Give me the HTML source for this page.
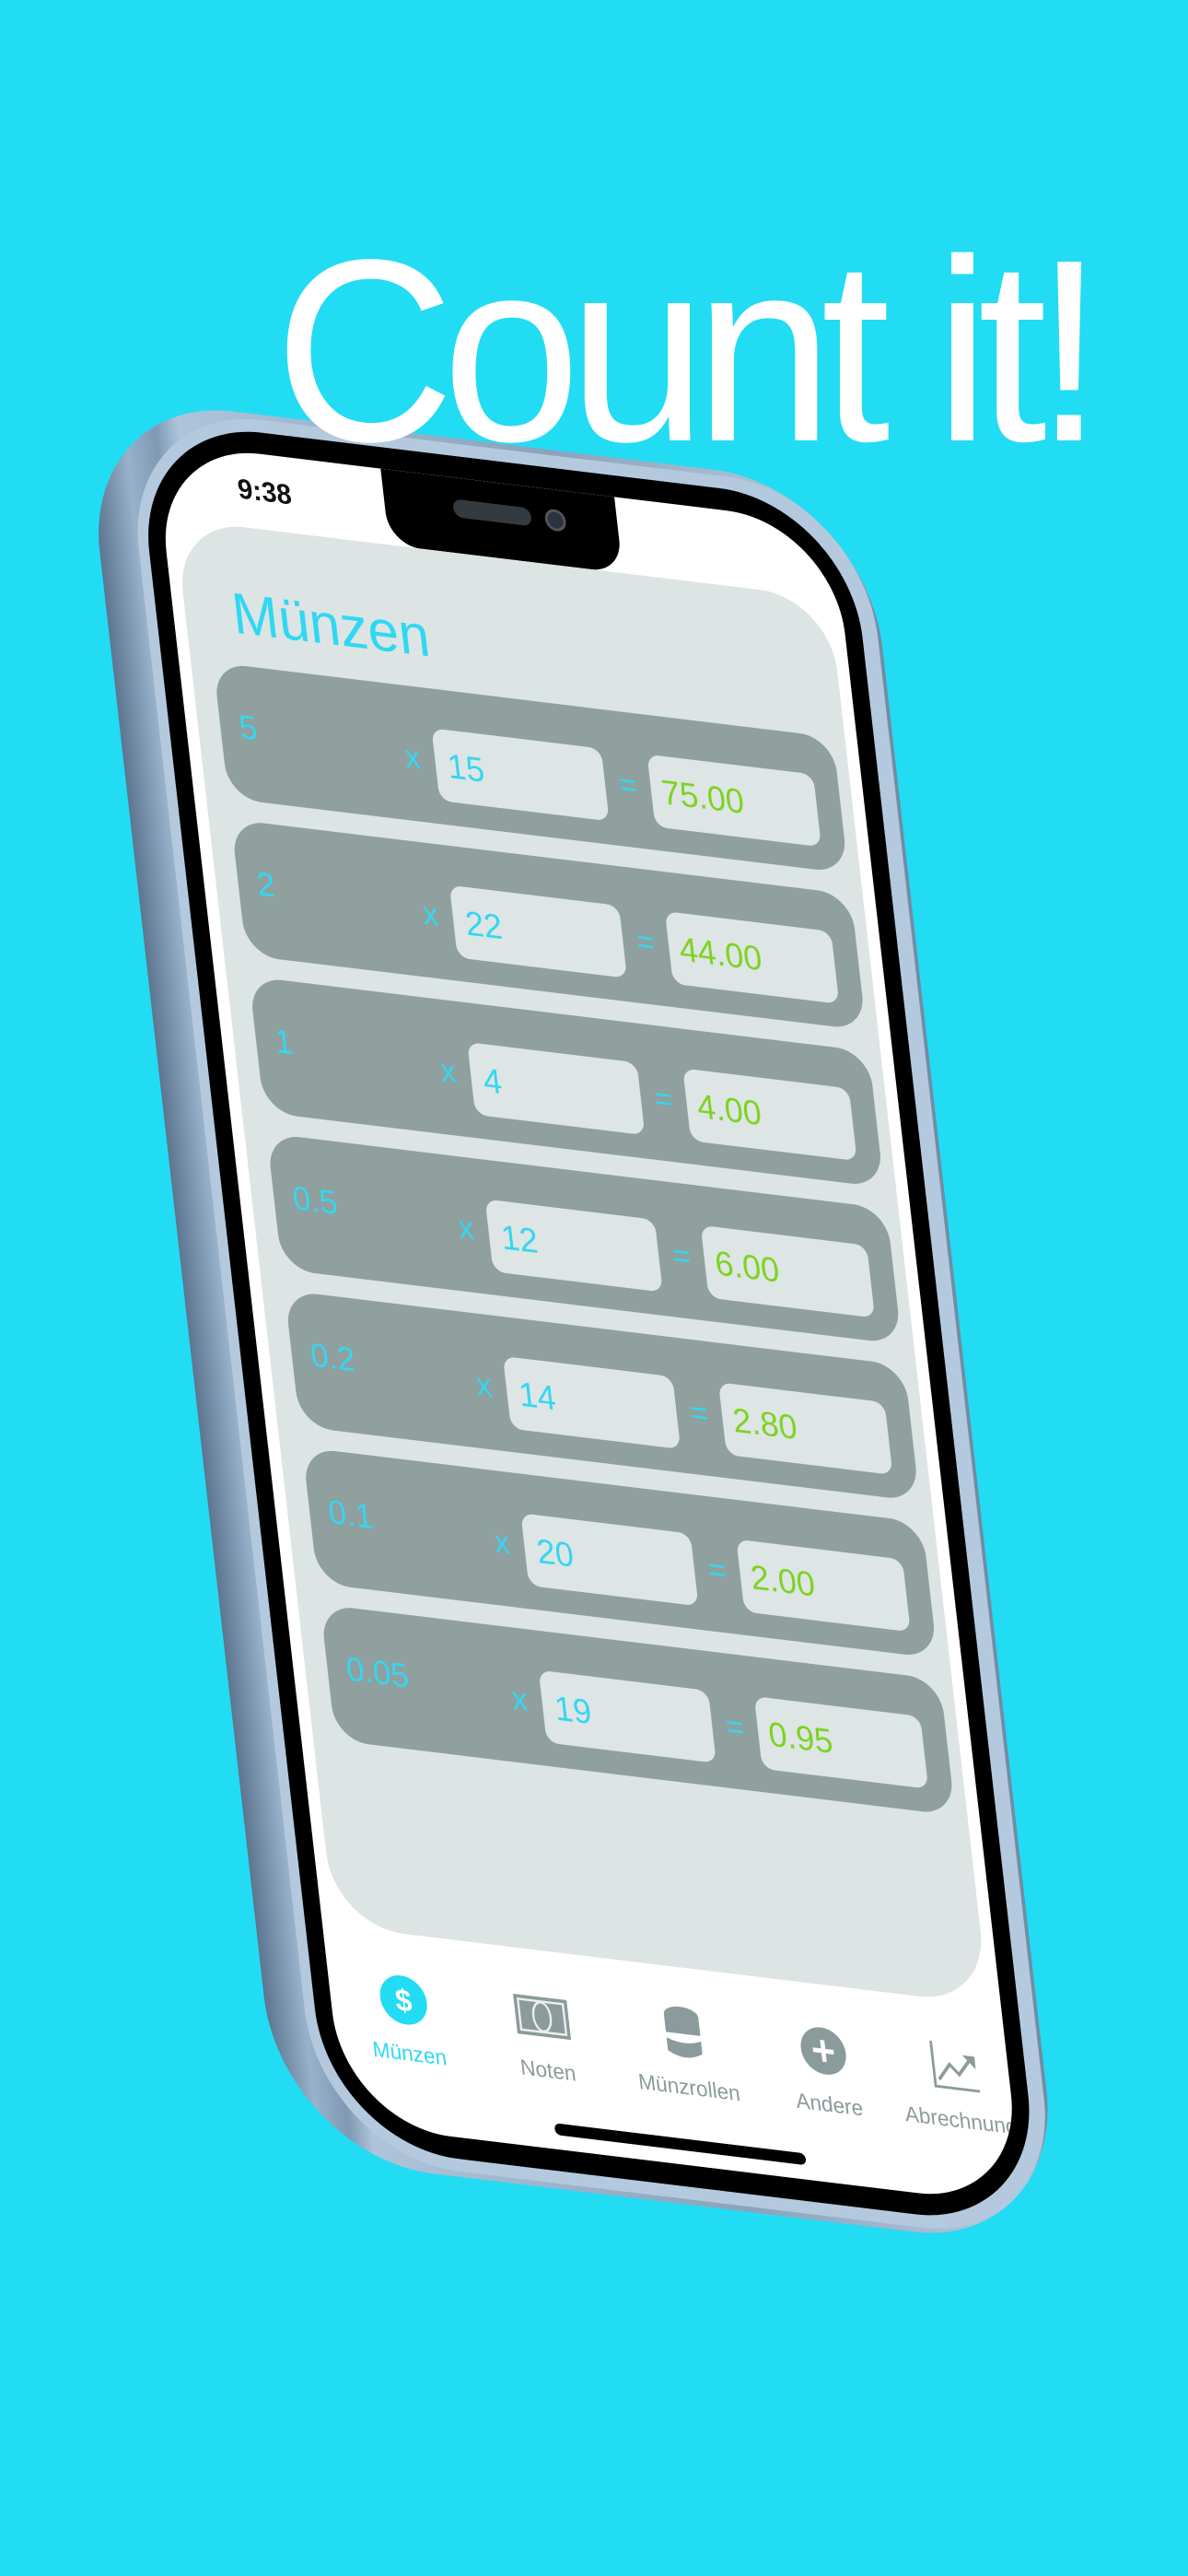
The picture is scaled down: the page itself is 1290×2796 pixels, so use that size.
<!DOCTYPE html>
<html><head><meta charset="utf-8"><style>
*{margin:0;padding:0;box-sizing:border-box}
html,body{width:1290px;height:2796px;overflow:hidden;background:#22DCF3;font-family:"Liberation Sans",sans-serif}
#title{position:absolute;left:298px;top:240px;font-size:282px;color:#fff;letter-spacing:-14px;line-height:1;z-index:5;white-space:nowrap;font-weight:300;transform:scaleX(0.96);transform-origin:left top}
#phone{position:absolute;left:0;top:0;width:860px;height:1930px;transform-origin:0 0;transform:matrix(0.94,0.114,0.112,0.985,127,437)}
.body{position:absolute;left:-40px;top:-6px;width:904px;height:1942px;border-radius:175px;background:linear-gradient(90deg,#5d7590 0%,#98b2cb 5%,#7f99b4 9%,#adc4da 12%,#8aa3bb 60%,#b6cbe0 96%,#6f88a2 100%)}
.rim{position:absolute;left:6px;top:0;width:854px;height:1930px;border-radius:160px;background:#b4c9de}
.black{position:absolute;left:18px;top:14px;width:824px;height:1902px;border-radius:148px;background:#000}
.screen{position:absolute;left:38px;top:38px;width:784px;height:1854px;border-radius:122px;background:#fff;overflow:hidden}
.notch{position:absolute;left:262px;top:0;width:270px;height:84px;background:#000;border-radius:0 0 36px 36px}
.spk{position:absolute;left:80px;top:24px;width:90px;height:20px;border-radius:10px;background:#333a40}
.cam{position:absolute;left:186px;top:22px;width:24px;height:24px;border-radius:50%;background:#2a3340;border:3px solid #555}
.time{position:absolute;left:92px;top:24px;font-size:31px;font-weight:bold;color:#111}
.card{position:absolute;left:14px;top:84px;width:756px;height:1550px;border-radius:80px;background:#dce4e4}
.h1{position:absolute;left:55px;top:60px;font-size:64px;color:#2fd8f2}
.row{position:absolute;left:26px;width:716px;height:150px;border-radius:38px;background:#8fa09f}
.row .l{position:absolute;left:22px;top:48px;font-size:37px;color:#36d6f0}
.row .x{position:absolute;left:212px;top:58px;font-size:36px;color:#36d6f0}
.row .b1{position:absolute;left:247px;top:44px;width:196px;height:80px;border-radius:14px;background:#dde5e5;font-size:38px;color:#36d6f0;padding:20px 14px}
.row .eq{position:absolute;left:459px;top:60px;font-size:36px;color:#36d6f0}
.row .b2{position:absolute;left:496px;top:44px;width:192px;height:80px;border-radius:14px;background:#dde5e5;font-size:38px;color:#7ed321;padding:20px 12px}
.tab{position:absolute;top:1676px;width:170px;margin-left:-85px;text-align:center;font-size:24px;color:#8b9b9b}
.tab .ic{height:64px;display:flex;justify-content:center;align-items:center;margin-bottom:14px}
.home{position:absolute;left:245px;top:1825px;width:290px;height:13px;border-radius:7px;background:#000}
</style></head><body>
<div id="title">Count it!</div>
<div id="phone">
 <div class="body"></div>
 <div class="rim"></div>
 <div class="black"></div>
 <div class="screen">
  <div class="time">9:38</div>
  <div class="notch"><div class="spk"></div><div class="cam"></div></div>
  <svg style="position:absolute;left:620px;top:90px" width="120" height="36" viewBox="0 0 120 36">
   <g fill="#aaa"><rect x="0" y="14" width="4" height="8"/><rect x="7" y="14" width="4" height="8"/><rect x="14" y="14" width="4" height="8"/><rect x="21" y="14" width="4" height="8"/></g>
   <path d="M36 12 Q48 2 60 12 M40 17 Q48 10 56 17" stroke="#000" stroke-width="4" fill="none"/><circle cx="48" cy="22" r="3.5" fill="#000"/>
   <rect x="70" y="6" width="38" height="20" rx="5" fill="#000"/><rect x="110" y="12" width="3" height="8" fill="#555"/>
  </svg>
  <div class="card">
   <div class="h1">Münzen</div>
   <div class="row" style="top:155px"><span class="l">5</span><span class="x">x</span><div class="b1">15</div><span class="eq">=</span><div class="b2">75.00</div></div>
   <div class="row" style="top:328px"><span class="l">2</span><span class="x">x</span><div class="b1">22</div><span class="eq">=</span><div class="b2">44.00</div></div>
   <div class="row" style="top:501px"><span class="l">1</span><span class="x">x</span><div class="b1">4</div><span class="eq">=</span><div class="b2">4.00</div></div>
   <div class="row" style="top:674px"><span class="l">0.5</span><span class="x">x</span><div class="b1">12</div><span class="eq">=</span><div class="b2">6.00</div></div>
   <div class="row" style="top:847px"><span class="l">0.2</span><span class="x">x</span><div class="b1">14</div><span class="eq">=</span><div class="b2">2.80</div></div>
   <div class="row" style="top:1020px"><span class="l">0.1</span><span class="x">x</span><div class="b1">20</div><span class="eq">=</span><div class="b2">2.00</div></div>
   <div class="row" style="top:1193px"><span class="l">0.05</span><span class="x">x</span><div class="b1">19</div><span class="eq">=</span><div class="b2">0.95</div></div>
  </div>
  <div class="tab" style="left:85px;color:#2fd8f2"><div class="ic"><svg width="54" height="54"><circle cx="27" cy="27" r="27" fill="#22dcf3"/><text x="27" y="39" font-size="34" font-weight="bold" fill="#fff" text-anchor="middle" font-family="Liberation Sans">$</text></svg></div>Münzen</div>
  <div class="tab" style="left:245px"><div class="ic"><svg width="62" height="44"><rect x="0" y="0" width="62" height="44" fill="#8b9b9b"/><rect x="5" y="5" width="52" height="34" fill="none" stroke="#eee" stroke-width="2.5"/><ellipse cx="31" cy="22" rx="10" ry="16" fill="none" stroke="#eee" stroke-width="2.5"/></svg></div>Noten</div>
  <div class="tab" style="left:408px"><div class="ic"><svg width="40" height="60"><ellipse cx="20" cy="10" rx="20" ry="10" fill="#8b9b9b"/><rect x="0" y="10" width="40" height="20" fill="#8b9b9b"/><path d="M0 36 Q20 44 40 36 V50 Q20 62 0 50Z" fill="#8b9b9b"/></svg></div>Münzrollen</div>
  <div class="tab" style="left:570px"><div class="ic"><svg width="52" height="52"><circle cx="26" cy="26" r="26" fill="#8b9b9b"/><path d="M26 14V38M14 26H38" stroke="#fff" stroke-width="5"/></svg></div>Andere</div>
  <div class="tab" style="left:722px"><div class="ic"><svg width="56" height="56"><path d="M3 2V52H54" stroke="#8b9b9b" stroke-width="3" fill="none"/><path d="M8 44L22 26L32 36L48 16" stroke="#8b9b9b" stroke-width="3.5" fill="none"/><path d="M38 14H52V28Z" fill="#8b9b9b"/></svg></div>Abrechnung</div>
  <div class="home"></div>
 </div>
</div>
</body></html>
